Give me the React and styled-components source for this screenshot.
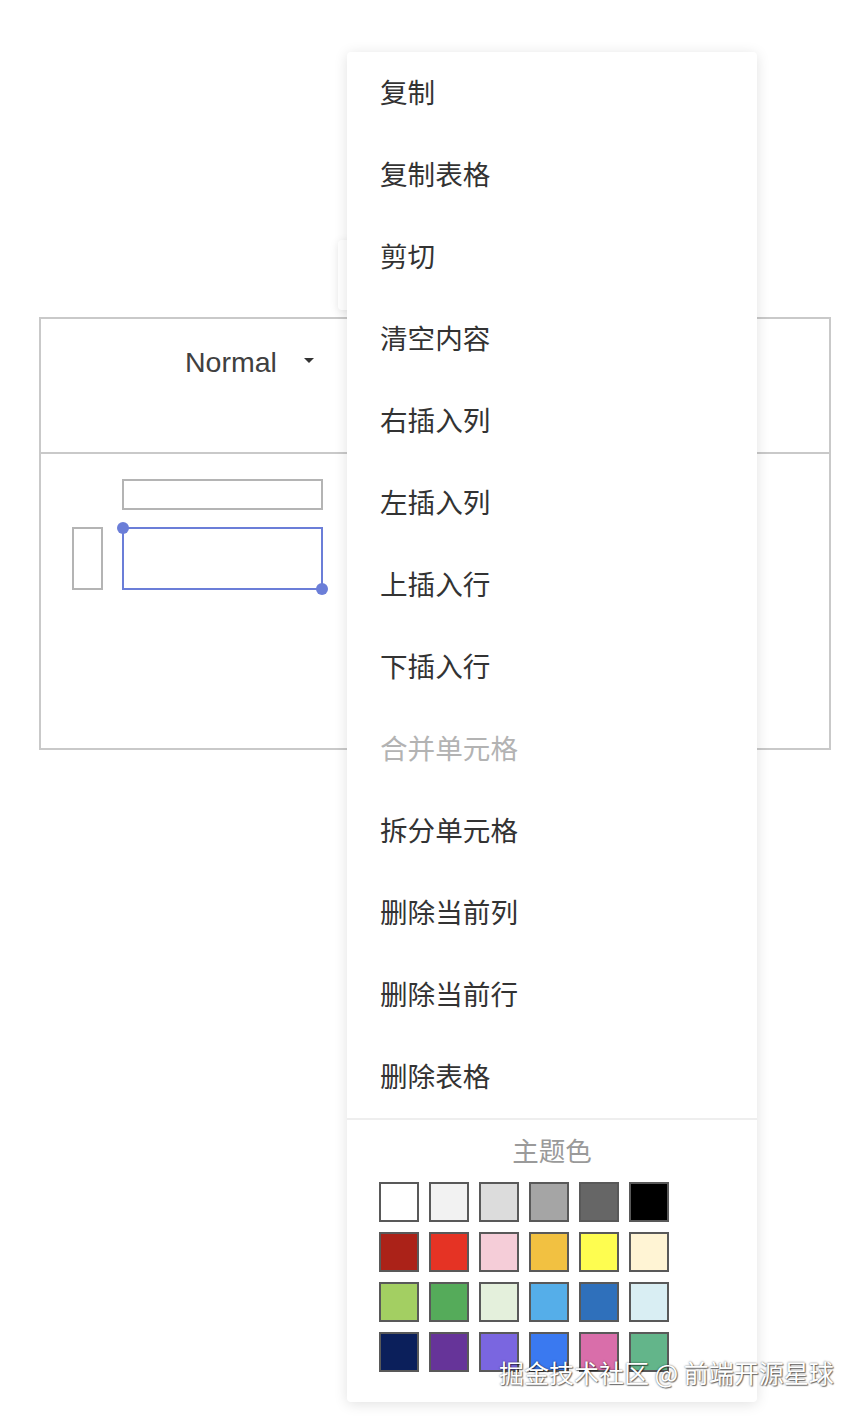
import styled, { createGlobalStyle } from 'styled-components';

const GlobalStyle = createGlobalStyle`
  html, body {
    margin: 0;
    padding: 0;
    background: #fff;
  }
  body {
    font-family: "Liberation Sans", "Noto Sans CJK SC", sans-serif;
  }
`

const menuItems = [
  { label: '复制' },
  { label: '复制表格' },
  { label: '剪切' },
  { label: '清空内容' },
  { label: '右插入列' },
  { label: '左插入列' },
  { label: '上插入行' },
  { label: '下插入行' },
  { label: '合并单元格', disabled: true },
  { label: '拆分单元格' },
  { label: '删除当前列' },
  { label: '删除当前行' },
  { label: '删除表格' },
];

const themeColors = [
  '#ffffff', '#f2f2f2', '#dcdcdc', '#a5a5a5', '#666666', '#000000',
  '#ab2218', '#e53324', '#f5cdd8', '#f2c141', '#fefd50', '#fff4d4',
  '#a3cf62', '#55ab5a', '#e4f0dc', '#55aee9', '#2f70bb', '#d9eef3',
  '#0b1f5b', '#663499', '#7a66e0', '#3a79f0', '#d96eaa', '#63b58a',
];

export default function App() {
  return (
    <>
      <GlobalStyle />
      <StyledCanvas>
        <StyledTable>
          <StyledHeaderRow>
            <StyledHeading>Normal</StyledHeading>
            <StyledCaret />
          </StyledHeaderRow>
          <StyledBodyRow>
            <StyledCellGrid>
              <span />
              <StyledBox />
              <StyledBox tall />
              <StyledBox tall selected>
                <StyledHandle corner="start" />
                <StyledHandle corner="end" />
              </StyledBox>
            </StyledCellGrid>
          </StyledBodyRow>
        </StyledTable>

        <StyledHiddenPopup />

        <StyledMenu>
          {menuItems.map((item) => (
            <StyledMenuItem key={item.label} disabled={item.disabled}>
              {item.label}
            </StyledMenuItem>
          ))}
          <StyledPalette>
            <StyledPaletteTitle>主题色</StyledPaletteTitle>
            <StyledSwatches>
              {themeColors.map((c, i) => (
                <StyledSwatch key={i} style={{ background: c }} />
              ))}
            </StyledSwatches>
          </StyledPalette>
        </StyledMenu>

        <StyledWatermark>掘金技术社区 @ 前端开源星球</StyledWatermark>
      </StyledCanvas>
    </>
  )
}

const StyledCanvas = styled.div`
  position: relative;
  width: 862px;
  height: 1416px;
  padding: 317px 0 0 39px;
  box-sizing: border-box;
  overflow: hidden;
`

const StyledTable = styled.div`
  width: 792px;
  height: 433px;
  box-sizing: border-box;
  border: 2px solid #c9c9c9;
  display: flex;
  flex-direction: column;
`

const StyledHeaderRow = styled.div`
  height: 135px;
  border-bottom: 2px solid #c9c9c9;
  display: flex;
  align-items: flex-start;
  padding: 26px 0 0 144px;
  box-sizing: border-box;
`

const StyledHeading = styled.div`
  font-family: "Liberation Sans", Arial, sans-serif;
  font-size: 28.5px;
  line-height: 34px;
  color: #404040;
`

const StyledCaret = styled.span`
  margin: 13px 0 0 27px;
  width: 0;
  height: 0;
  border-left: 5px solid transparent;
  border-right: 5px solid transparent;
  border-top: 5px solid #333;
`

const StyledBodyRow = styled.div`
  flex: 1;
  padding: 25px 0 0 31px;
`

const StyledCellGrid = styled.div`
  display: grid;
  grid-template-columns: 31px 201px;
  grid-auto-rows: auto;
  column-gap: 19px;
  row-gap: 17px;
`

const StyledBox = styled.div`
  position: relative;
  height: ${({ tall }) => (tall ? '63px' : '31px')};
  box-sizing: border-box;
  border: 2px solid ${({ selected }) => (selected ? '#6b7ed8' : '#b4b4b4')};
`

const StyledHandle = styled.span`
  position: absolute;
  width: 12px;
  height: 12px;
  border-radius: 50%;
  background: #6b7ed8;
  ${({ corner }) => corner === 'start'
    ? 'left: -7px; top: -7px;'
    : 'right: -7px; bottom: -7px;'}
`

const StyledHiddenPopup = styled.div`
  position: absolute;
  left: 338px;
  top: 240px;
  width: 200px;
  height: 70px;
  background: #fff;
  border-radius: 4px;
  box-shadow: 0 2px 10px rgba(0, 0, 0, 0.1);
`

const StyledMenu = styled.div`
  position: absolute;
  left: 347px;
  top: 52px;
  width: 410px;
  background: #fff;
  border-radius: 4px;
  box-shadow: 0 2px 14px rgba(0, 0, 0, 0.12);
  font-family: "Noto Sans CJK SC", sans-serif;
`

const StyledMenuItem = styled.div`
  height: 82px;
  box-sizing: border-box;
  padding: 0 0 4px 33px;
  display: flex;
  align-items: center;
  font-size: 27.6px;
  color: ${({ disabled }) => (disabled ? '#b3b3b3' : '#333')};
`

const StyledPalette = styled.div`
  border-top: 2px solid #eeeeee;
  padding: 13px 0 30px 32px;
  display: flex;
  flex-direction: column;
`

const StyledPaletteTitle = styled.div`
  text-align: center;
  padding-right: 32px;
  font-size: 26.5px;
  line-height: 34px;
  color: #9a9a9a;
  margin-bottom: 15px;
`

const StyledSwatches = styled.div`
  display: grid;
  grid-template-columns: repeat(6, 40px);
  gap: 10px;
`

const StyledSwatch = styled.div`
  width: 40px;
  height: 40px;
  box-sizing: border-box;
  border: 2px solid #595959;
`

const StyledWatermark = styled.div`
  position: absolute;
  left: 499px;
  top: 1356px;
  font-family: "Noto Sans CJK SC", sans-serif;
  font-size: 25px;
  line-height: 32px;
  color: #fff;
  white-space: nowrap;
  text-shadow: 0 0 2px rgba(0, 0, 0, 0.6), 1px 1px 1px rgba(0, 0, 0, 0.5);
`
